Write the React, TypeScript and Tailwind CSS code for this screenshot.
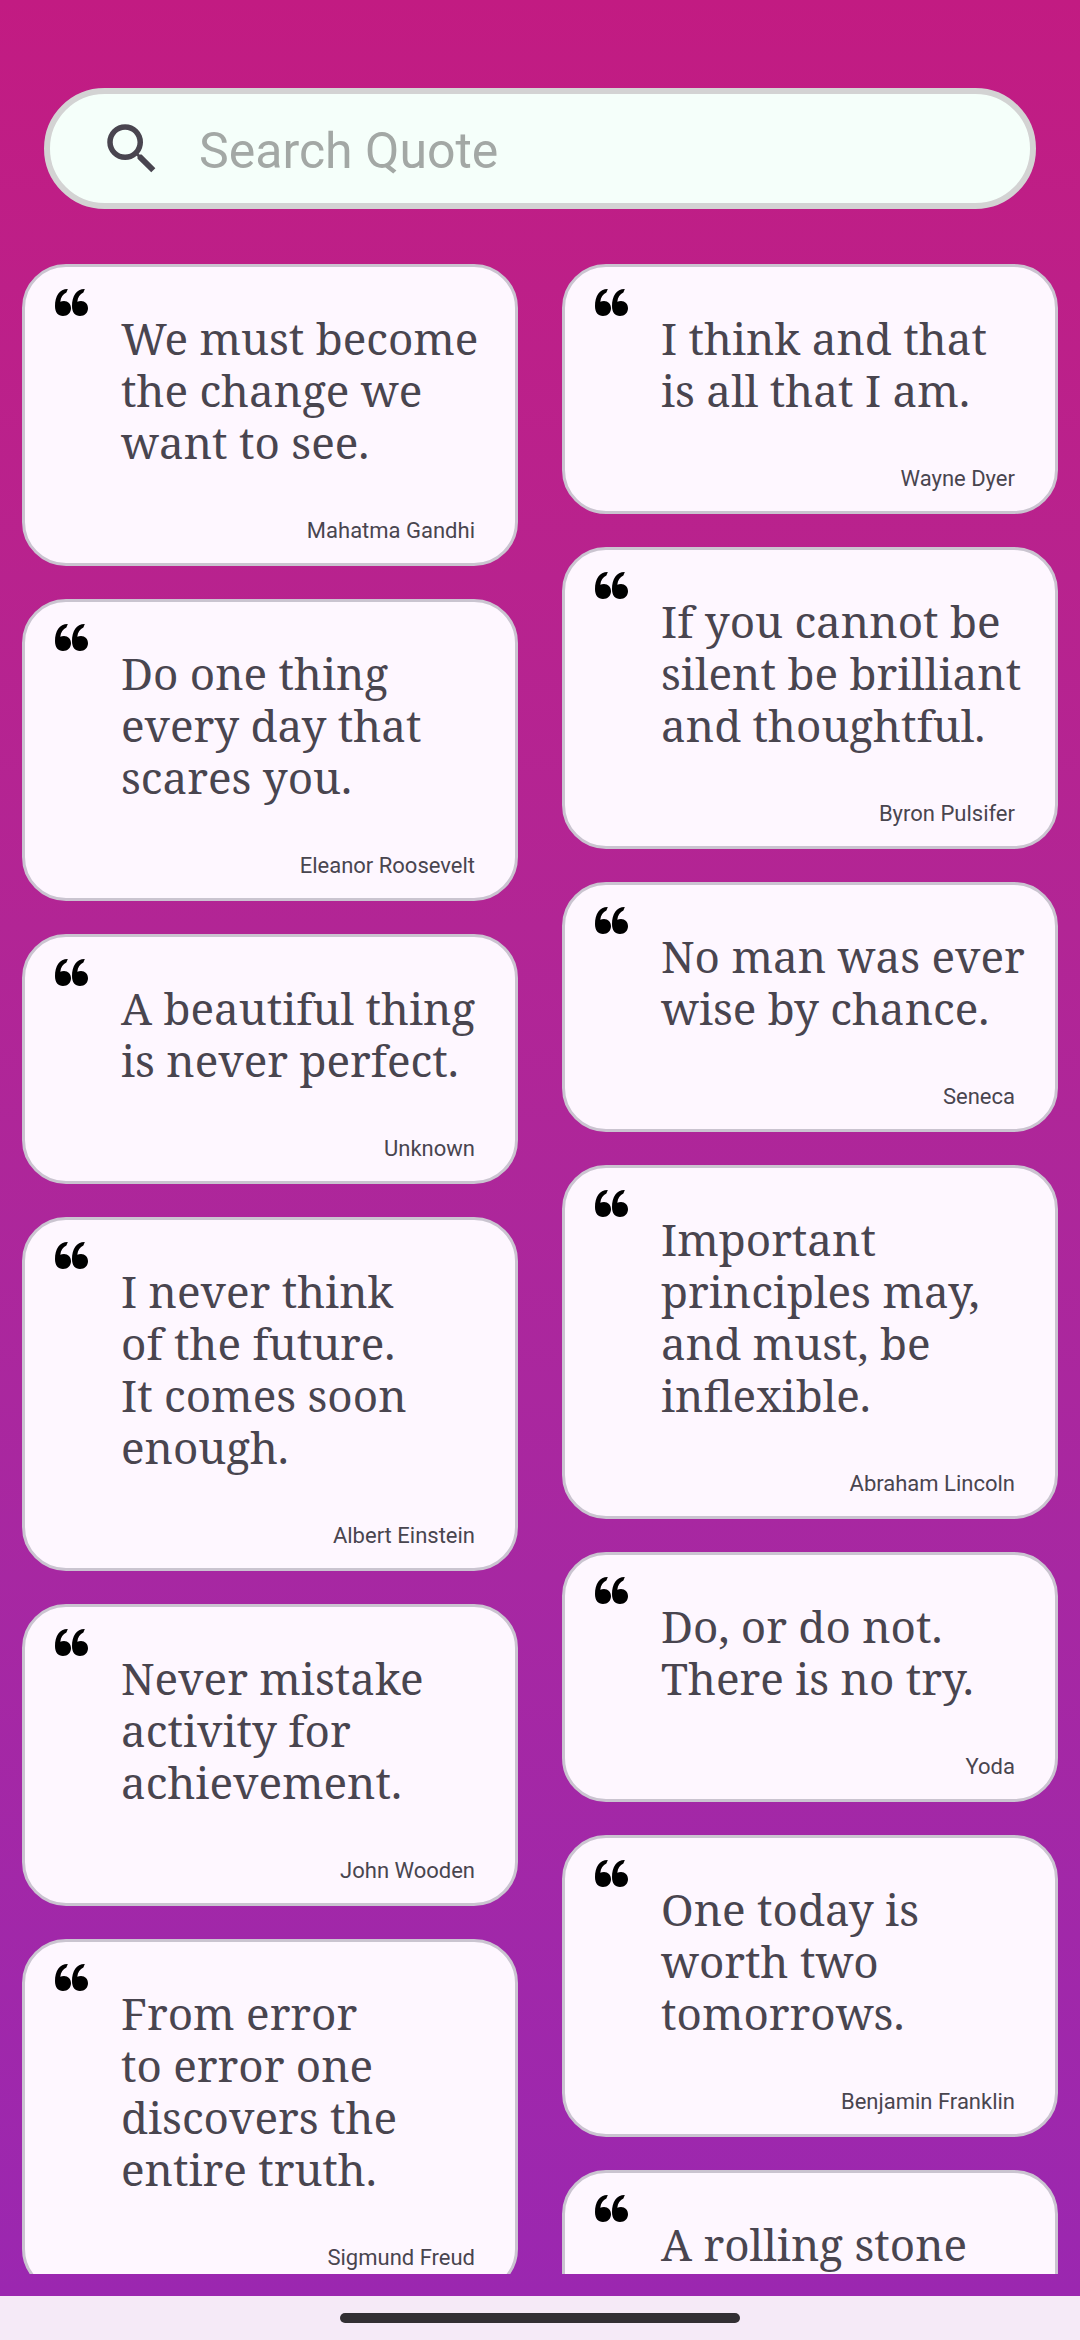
type Quote = { text: string; author?: string };

const leftColumn: Quote[] = [
  { text: "We must become\nthe change we\nwant to see.", author: "Mahatma Gandhi" },
  { text: "Do one thing\nevery day that\nscares you.", author: "Eleanor Roosevelt" },
  { text: "A beautiful thing\nis never perfect.", author: "Unknown" },
  { text: "I never think\nof the future.\nIt comes soon\nenough.", author: "Albert Einstein" },
  { text: "Never mistake\nactivity for\nachievement.", author: "John Wooden" },
  { text: "From error\nto error one\ndiscovers the\nentire truth.", author: "Sigmund Freud" },
];

const rightColumn: Quote[] = [
  { text: "I think and that\nis all that I am.", author: "Wayne Dyer" },
  { text: "If you cannot be\nsilent be brilliant\nand thoughtful.", author: "Byron Pulsifer" },
  { text: "No man was ever\nwise by chance.", author: "Seneca" },
  { text: "Important\nprinciples may,\nand must, be\ninflexible.", author: "Abraham Lincoln" },
  { text: "Do, or do not.\nThere is no try.", author: "Yoda" },
  { text: "One today is\nworth two\ntomorrows.", author: "Benjamin Franklin" },
  { text: "A rolling stone" },
];

function QuoteMark() {
  return (
    <svg viewBox="0 0 33 27" className="h-[27px] w-[33px] shrink-0" fill="#000" aria-hidden="true">
      <path d="M12.5 0C4.5 0 0 7 0 17C0 23.5 3 27 8 27C12.8 27 16 23.8 16 19.3C16 15 13 12 9 12C7.6 12 6.3 12.2 5.3 12.7C5.8 8 8 5.4 11.4 3.5L12.8 0Z" />
      <path d="M29.5 0C21.5 0 17 7 17 17C17 23.5 20 27 25 27C29.8 27 33 23.8 33 19.3C33 15 30 12 26 12C24.6 12 23.3 12.2 22.3 12.7C22.8 8 25 5.4 28.4 3.5L29.8 0Z" />
    </svg>
  );
}

function QuoteCard({ text, author }: Quote) {
  return (
    <figure className="shrink-0 rounded-[44px] border-[3px] border-[#cac4d0] bg-[#fef7ff] pt-[22px] pb-[19px] pl-[30px] text-[#49454f]">
      <div className="flex items-start gap-[33px]">
        <QuoteMark />
        <blockquote className="mt-[23px] whitespace-pre font-['Noto_Serif','DejaVu_Serif_Condensed',serif] text-[44px] leading-[52px]">
          {text}
        </blockquote>
      </div>
      <figcaption className="mt-[50px] mr-10 text-right text-[22px] leading-[26px]">{author}</figcaption>
    </figure>
  );
}

function Column({ quotes }: { quotes: Quote[] }) {
  return (
    <div className="flex min-w-0 flex-1 flex-col gap-[33px]">
      {quotes.map((q) => (
        <QuoteCard key={q.text} {...q} />
      ))}
    </div>
  );
}

export default function App() {
  return (
    <div className="flex h-screen flex-col overflow-hidden font-['Roboto',sans-serif]">
      <main className="flex min-h-0 flex-1 flex-col bg-linear-to-b from-[#c21b82] to-[#9b27b0] pt-[88px] pb-[22px]">
        <label className="mx-11 flex h-[121px] shrink-0 items-center gap-[34px] rounded-full border-6 border-[#d3d3d3] bg-[#f5fffa] px-[49px]">
          <svg viewBox="0 0 24 24" className="size-[66px] shrink-0" fill="#49454f" aria-hidden="true">
            <path d="M15.5 14h-.79l-.28-.27A6.471 6.471 0 0 0 16 9.5 6.5 6.5 0 1 0 9.5 16c1.61 0 3.09-.59 4.23-1.57l.27.28v.79l5 4.99L20.49 19l-4.99-5zm-6 0C7.01 14 5 11.99 5 9.5S7.01 5 9.5 5 14 7.01 14 9.5 11.99 14 9.5 14z" />
          </svg>
          <input
            type="text"
            aria-label="Search Quote"
            placeholder="Search Quote"
            className="min-w-0 flex-1 bg-transparent pt-1 text-[50px] leading-[60px] text-[#49454f] outline-none placeholder:text-[#a3a8a5]"
          />
        </label>
        <section aria-label="Quotes" className="mt-[55px] flex min-h-0 flex-1 gap-11 overflow-hidden px-[22px]">
          <Column quotes={leftColumn} />
          <Column quotes={rightColumn} />
        </section>
      </main>
      <footer className="flex h-11 shrink-0 items-center justify-center bg-[#f5eaf7]">
        <div className="h-[10px] w-[400px] rounded-full bg-[#322f33]" />
      </footer>
    </div>
  );
}
